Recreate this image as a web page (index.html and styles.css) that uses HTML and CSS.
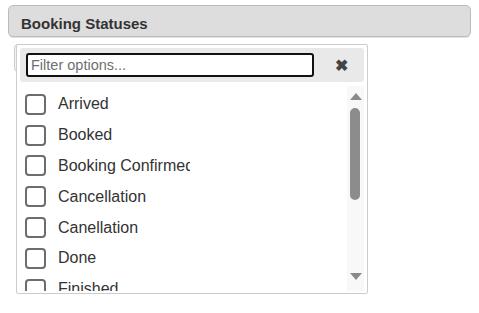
FILE: index.html
```html
<!DOCTYPE html>
<html lang="en">
<head>
  <meta charset="UTF-8" />
  <title>Booking Statuses</title>
  <link rel="stylesheet" href="styles.css">
</head>
<body>
  <div class="panel-header">Booking Statuses</div>

  <div class="picker">
    <div class="picker-button"></div>

    <div class="dropdown">
      <div class="filter-bar">
        <input class="filter-input" type="text" placeholder="Filter options..." />
        <span class="filter-clear">&#10006;</span>
      </div>

      <div class="list-wrap">
        <ul class="options">
          <li><span class="box"></span>Arrived</li>
          <li><span class="box"></span>Booked</li>
          <li><span class="box"></span>Booking Confirmed</li>
          <li><span class="box"></span>Cancellation</li>
          <li><span class="box"></span>Canellation</li>
          <li><span class="box"></span>Done</li>
          <li><span class="box"></span>Finished</li>
        </ul>
        <div class="scrollbar">
          <span class="arrow-up"></span>
          <span class="thumb"></span>
          <span class="arrow-down"></span>
        </div>
      </div>
    </div>
  </div>
</body>
</html>
```

FILE: styles.css
```css
* {
  box-sizing: border-box;
}
body {
  margin: 0;
  padding: 5px 8px;
  font-family: "Liberation Sans", Arial, sans-serif;
  color: #333;
  background: #fff;
}
.panel-header {
  height: 32px;
  padding: 2px 0 0 12px;
  line-height: 31px;
  border: 1px solid #bbb;
  border-radius: 5px;
  background: #ddd;
  font-size: 15px;
  font-weight: bold;
  color: #333;
  box-shadow: 0 2px 0 -1px #e2e2e2;
}
.picker {
  display: grid;
  margin: 7px 0 0 6px;
  width: 354px;
}
.picker-button {
  grid-area: 1 / 1;
  align-self: start;
  height: 28px;
  border: 1px solid #ccc;
  border-radius: 4px;
  background: #f4f4f4;
}
.dropdown {
  grid-area: 1 / 1;
  z-index: 1;
  width: 352px;
  height: 250px;
  margin-left: 2px;
  padding: 3px;
  border: 1px solid #ccc;
  border-radius: 2px;
  background: #fff;
}
.filter-bar {
  display: flex;
  align-items: center;
  height: 34px;
  padding-left: 6px;
  border-radius: 3px;
  background: #e9e9e9;
}
.filter-input {
  width: 288px;
  height: 24px;
  margin: 0;
  padding: 0 3px;
  border: 2px solid #111;
  border-radius: 3px;
  font-family: inherit;
  font-size: 14.5px;
  color: #333;
  background: #fff;
}
.filter-input::placeholder {
  color: #6f6f6f;
}
.filter-clear {
  flex: 1;
  padding-left: 4px;
  text-align: center;
  font-size: 16px;
  font-weight: bold;
  color: #444;
}
.list-wrap {
  display: flex;
  height: 205px;
  margin-top: 4px;
}
.options {
  flex: 1;
  margin: 0;
  padding: 3px 0 0 5px;
  list-style: none;
  overflow: hidden;
}
.options li {
  display: flex;
  align-items: center;
  height: 30.8px;
  font-size: 16px;
  white-space: nowrap;
  overflow: hidden;
  max-width: 165px;
}
.box {
  flex: none;
  width: 21px;
  height: 21px;
  margin-right: 12px;
  border: 2px solid #6d6d6d;
  border-radius: 4px;
}
.scrollbar {
  position: relative;
  flex: none;
  width: 17px;
  background: #f8f8f8;
}
.arrow-up,
.arrow-down {
  position: absolute;
  left: 3px;
  width: 0;
  height: 0;
  border-left: 6px solid transparent;
  border-right: 6px solid transparent;
}
.arrow-up {
  top: 7px;
  border-bottom: 7px solid #8a8a8a;
}
.arrow-down {
  bottom: 11px;
  border-top: 7px solid #8a8a8a;
}
.thumb {
  position: absolute;
  top: 22px;
  left: 3px;
  width: 10px;
  height: 92px;
  border-radius: 5px;
  background: #8c8c8c;
}
```
